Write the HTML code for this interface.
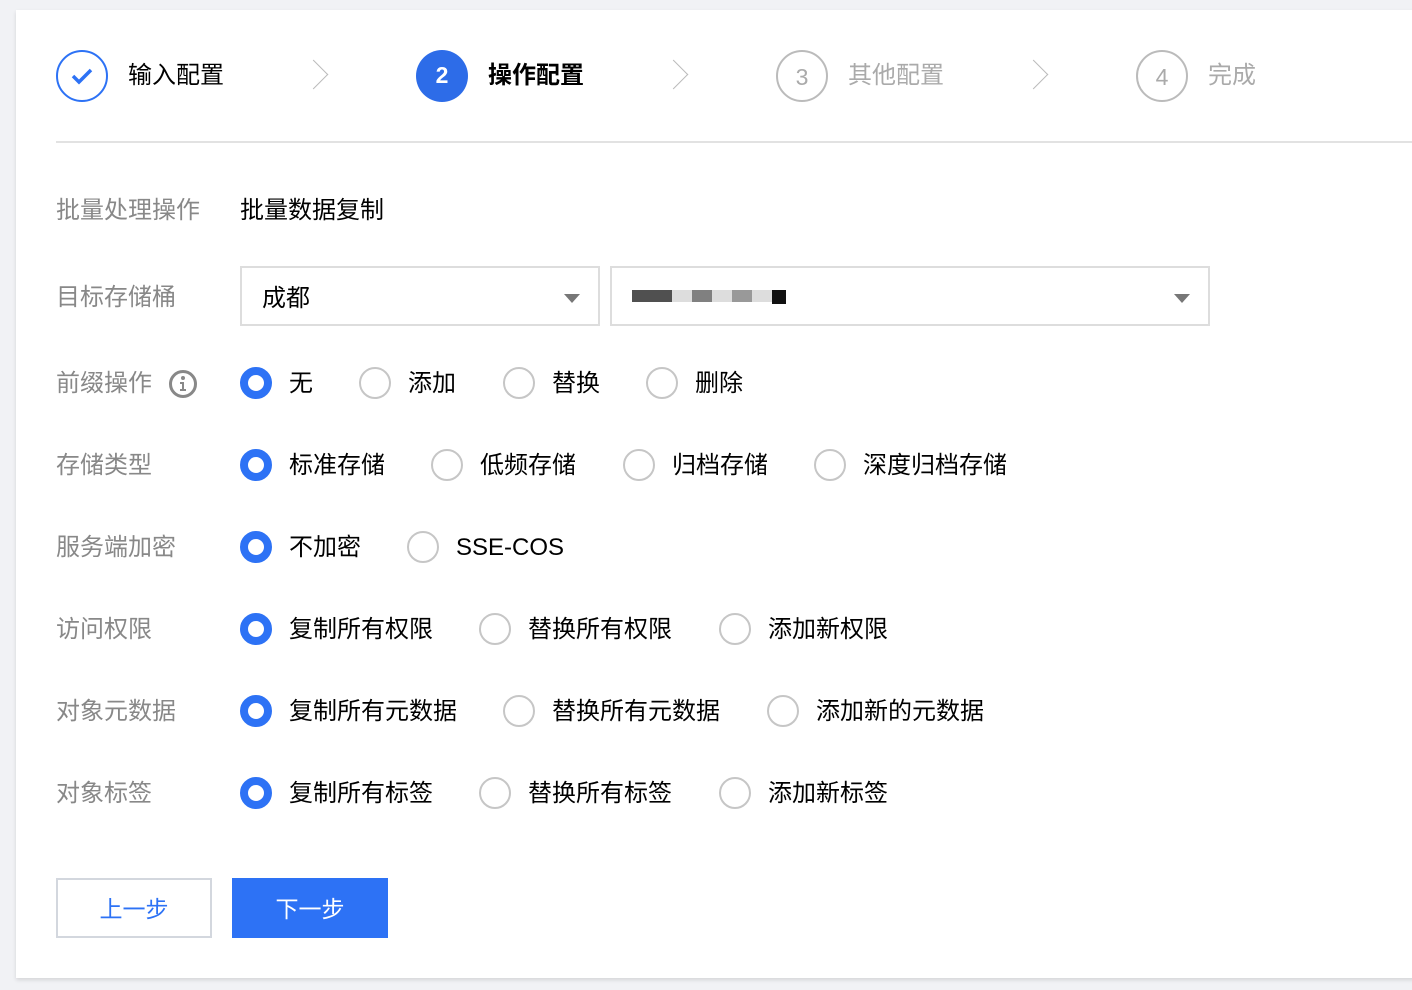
<!DOCTYPE html>
<html><head><meta charset="utf-8"><style>
body{margin:0;background:#f1f2f5;width:1412px;height:990px;overflow:hidden;font-family:"Liberation Sans","Noto Sans CJK SC",sans-serif;}
.card{position:absolute;left:16px;top:10px;width:1400px;height:968px;background:#fff;box-shadow:0 2px 4px rgba(0,0,0,.12);}
.abs{position:absolute;}
.step{position:absolute;top:50px;width:52px;height:52px;border-radius:50%;box-sizing:border-box;text-align:center;line-height:50px;font-size:23px;}
.st{position:absolute;top:60px;font-size:24px;line-height:32px;}
.chev{position:absolute;top:64px;width:20px;height:20px;border-right:1.5px solid #bbb;border-top:1.5px solid #bbb;transform:rotate(45deg);}
.lbl{position:absolute;left:56px;font-size:24px;color:#888;line-height:30px;margin-top:1px;}
.r{position:absolute;width:32px;height:32px;border-radius:50%;box-sizing:border-box;border:2px solid #c6c6c6;}
.r.on{border:8px solid #2d72f5;}
.t{position:absolute;font-size:24px;color:#000;line-height:30px;margin-top:1px;}
.sel{position:absolute;top:266px;height:60px;border:2px solid #ddd;box-sizing:border-box;background:#fff;}
.tri{position:absolute;top:26px;width:0;height:0;border-left:8px solid transparent;border-right:8px solid transparent;border-top:9px solid #777;}
</style></head><body>
<div class="card"></div>
<div class="step" style="left:56px;border:2px solid #2d72f5;"><svg width="48" height="48" viewBox="0 0 48 48" style="position:absolute;left:0;top:0"><path d="M15 24 L21 30 L33 18" stroke="#2d72f5" stroke-width="3.5" fill="none"/></svg></div>
<div class="st" style="left:128px;color:#000">输入配置</div>
<div class="chev" style="left:303px"></div>
<div class="step" style="left:416px;background:#2d6ce8;color:#fff;font-weight:bold">2</div>
<div class="st" style="left:488px;color:#000;font-weight:bold">操作配置</div>
<div class="chev" style="left:663px"></div>
<div class="step" style="left:776px;border:2px solid #bbb;color:#aaa">3</div>
<div class="st" style="left:848px;color:#aaa">其他配置</div>
<div class="chev" style="left:1023px"></div>
<div class="step" style="left:1136px;border:2px solid #bbb;color:#aaa">4</div>
<div class="st" style="left:1208px;color:#aaa">完成</div>
<div class="abs" style="left:56px;top:141px;width:1356px;height:2px;background:#e2e2e2"></div>

<div class="lbl" style="top:195px">批量处理操作</div><div class="t" style="left:240px;top:195px">批量数据复制</div>
<div class="lbl" style="top:282px">目标存储桶</div>
<div class="sel" style="left:240px;width:360px"><div class="t" style="left:20px;top:15px">成都</div><div class="tri" style="left:322px"></div></div>
<div class="sel" style="left:610px;width:600px">
<div class="abs" style="left:20px;top:22px;width:40px;height:12px;background:#505050"></div>
<div class="abs" style="left:60px;top:22px;width:100px;height:12px;background:#ddd"></div>
<div class="abs" style="left:80px;top:22px;width:20px;height:12px;background:#808080"></div>
<div class="abs" style="left:120px;top:22px;width:20px;height:12px;background:#999"></div>
<div class="abs" style="left:160px;top:22px;width:14px;height:14px;background:#111"></div>
<div class="tri" style="left:562px"></div></div>

<div class="lbl" style="top:368px">前缀操作</div>
<svg class="abs" style="left:168px;top:369px" width="30" height="30" viewBox="0 0 30 30"><circle cx="15" cy="15" r="12.5" stroke="#888" stroke-width="3" fill="none"/><circle cx="15" cy="9" r="2" fill="#888"/><path d="M12 13h4v7h2v2h-6v-2h2v-5h-2z" fill="#888"/></svg>
<div class="r on" style="left:240px;top:367px"></div><div class="t" style="left:289px;top:368px">无</div>
<div class="r" style="left:359px;top:367px"></div><div class="t" style="left:408px;top:368px">添加</div>
<div class="r" style="left:503px;top:367px"></div><div class="t" style="left:552px;top:368px">替换</div>
<div class="r" style="left:646px;top:367px"></div><div class="t" style="left:695px;top:368px">删除</div>

<div class="lbl" style="top:450px">存储类型</div>
<div class="r on" style="left:240px;top:449px"></div><div class="t" style="left:289px;top:450px">标准存储</div>
<div class="r" style="left:431px;top:449px"></div><div class="t" style="left:480px;top:450px">低频存储</div>
<div class="r" style="left:623px;top:449px"></div><div class="t" style="left:672px;top:450px">归档存储</div>
<div class="r" style="left:814px;top:449px"></div><div class="t" style="left:863px;top:450px">深度归档存储</div>

<div class="lbl" style="top:532px">服务端加密</div>
<div class="r on" style="left:240px;top:531px"></div><div class="t" style="left:289px;top:532px">不加密</div>
<div class="r" style="left:407px;top:531px"></div><div class="t" style="left:456px;top:532px">SSE-COS</div>

<div class="lbl" style="top:614px">访问权限</div>
<div class="r on" style="left:240px;top:613px"></div><div class="t" style="left:289px;top:614px">复制所有权限</div>
<div class="r" style="left:479px;top:613px"></div><div class="t" style="left:528px;top:614px">替换所有权限</div>
<div class="r" style="left:719px;top:613px"></div><div class="t" style="left:768px;top:614px">添加新权限</div>

<div class="lbl" style="top:696px">对象元数据</div>
<div class="r on" style="left:240px;top:695px"></div><div class="t" style="left:289px;top:696px">复制所有元数据</div>
<div class="r" style="left:503px;top:695px"></div><div class="t" style="left:552px;top:696px">替换所有元数据</div>
<div class="r" style="left:767px;top:695px"></div><div class="t" style="left:816px;top:696px">添加新的元数据</div>

<div class="lbl" style="top:778px">对象标签</div>
<div class="r on" style="left:240px;top:777px"></div><div class="t" style="left:289px;top:778px">复制所有标签</div>
<div class="r" style="left:479px;top:777px"></div><div class="t" style="left:528px;top:778px">替换所有标签</div>
<div class="r" style="left:719px;top:777px"></div><div class="t" style="left:768px;top:778px">添加新标签</div>

<div class="abs" style="left:56px;top:878px;width:156px;height:60px;border:2px solid #d3d7de;box-sizing:border-box;color:#2d72f5;font-size:23px;text-align:center;line-height:58px">上一步</div>
<div class="abs" style="left:232px;top:878px;width:156px;height:60px;background:#2d72f5;color:#fff;font-size:23px;text-align:center;line-height:62px">下一步</div>
</body></html>
